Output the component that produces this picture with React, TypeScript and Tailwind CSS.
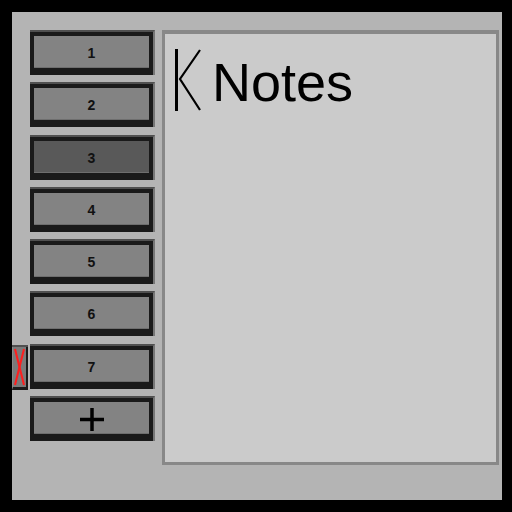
import React from "react";

const labels = ["1", "2", "3", "4", "5", "6", "7"];

function NoteButton({ label, selected, withDelete }: { label: string; selected?: boolean; withDelete?: boolean }) {
  return (
    <div className="relative w-[125px] h-[45px] border-t-2 border-r-2 border-t-[#505050] border-r-[#767676]">
      <div
        className={`w-full h-full border-[#1a1a1a] border-l-4 border-t-4 border-r-4 border-b-[7px] flex items-center justify-center shadow-[inset_0_-1px_0_#6e6e6e] ${
          selected ? "bg-[#595959]" : "bg-[#838383]"
        }`}
      >
        <span className="text-[14px] font-bold text-[#111] leading-none mt-[2px]" style={{ fontFamily: '"Liberation Sans", Arial, sans-serif' }}>
          {label}
        </span>
      </div>
      {withDelete && (
        <div className="absolute left-[-18px] top-[-1px] w-[16px] h-[45px] border-t-2 border-t-[#505050]">
          <div className="w-full h-full bg-[#7a7a7a] border-l border-l-[#8a8a8a] border-r-2 border-r-[#1a1a1a] border-b-[3px] border-b-[#1a1a1a]">
            <svg width="13" height="40" viewBox="0 0 13 40" className="block">
              <line x1="2" y1="2" x2="11" y2="38" stroke="#ff1e1e" strokeWidth="2" />
              <line x1="11" y1="2" x2="2" y2="38" stroke="#ff1e1e" strokeWidth="2" />
            </svg>
          </div>
        </div>
      )}
    </div>
  );
}

export default function App() {
  return (
    <div className="w-[512px] h-[512px] bg-black pt-[12px] pl-[12px] pr-[10px] pb-[12px]">
      <div className="w-full h-full bg-[#b4b4b4] flex pt-[18px] pl-[18px] pr-[3px] pb-[35px] gap-[7px]">
        <div className="flex flex-col gap-[7.3px]">
          {labels.map((l) => (
            <NoteButton key={l} label={l} selected={l === "3"} withDelete={l === "7"} />
          ))}
          <div className="w-[125px] h-[45px] border-t-2 border-r-2 border-t-[#505050] border-r-[#767676]">
            <div className="w-full h-full bg-[#838383] border-[#1a1a1a] border-l-4 border-t-4 border-r-4 border-b-[7px] flex items-center justify-center shadow-[inset_0_-1px_0_#6e6e6e]">
              <svg width="24" height="23" viewBox="0 0 24 23" className="mt-[2px]">
                <line x1="0" y1="11.5" x2="24" y2="11.5" stroke="#000" strokeWidth="3.5" />
                <line x1="12" y1="0" x2="12" y2="23" stroke="#000" strokeWidth="3.5" />
              </svg>
            </div>
          </div>
        </div>
        <div className="flex-1 bg-[#cbcbcb] border-[3px] border-t-4 border-[#888888] pt-[15px] pl-[10px]">
          <div className="flex items-center">
            <svg width="28" height="62" viewBox="0 0 28 62" className="shrink-0">
              <line x1="1.5" y1="0" x2="1.5" y2="62" stroke="#000" strokeWidth="3" />
              <polyline points="25,1 5,30 25,61" fill="none" stroke="#000" strokeWidth="2.2" />
            </svg>
            <span
              className="ml-[9px] text-[54px] leading-[50px] text-black mt-[3px]"
              style={{ fontFamily: '"Liberation Sans", Arial, sans-serif' }}
            >
              Notes
            </span>
          </div>
        </div>
      </div>
    </div>
  );
}
